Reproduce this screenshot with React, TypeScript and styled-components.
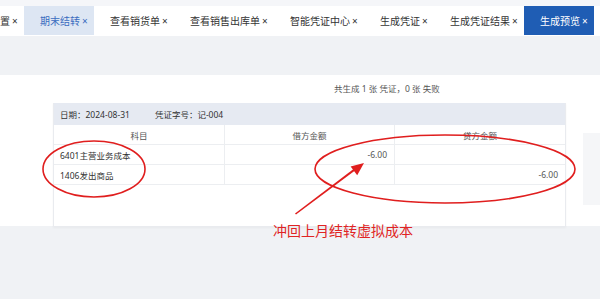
import React from "react";
import styled, { createGlobalStyle } from "styled-components";

const tabs = [
  { id: 0, label: "置", active: "" },
  { id: 1, label: "期末结转", active: "light" },
  { id: 2, label: "查看销货单", active: "" },
  { id: 3, label: "查看销售出库单", active: "" },
  { id: 4, label: "智能凭证中心", active: "" },
  { id: 5, label: "生成凭证", active: "" },
  { id: 6, label: "生成凭证结果", active: "" },
  { id: 7, label: "生成预览", active: "solid" },
];

const rows = [
  { id: 1, subject: "6401主营业务成本", debit: "-6.00", credit: "" },
  { id: 2, subject: "1406发出商品", debit: "", credit: "-6.00" },
];

const App = () => {
  return (
    <Page>
      <GlobalStyle />
      <TopStrip />
      <TabBar>
        <TabStrip>
          {tabs.map(({ id, label, active }) => (
            <Tab key={id} kind={active}>
              {label}
              <Close>×</Close>
            </Tab>
          ))}
        </TabStrip>
      </TabBar>
      <Spacer />
      <Panel>
        <Summary>共生成 1 张 凭证，0 张 失败</Summary>
        <Body>
          <Card>
            <CardHead>
              <span>日期：2024-08-31</span>
              <span>凭证字号：记-004</span>
            </CardHead>
            <Table>
              <HeadCell>科目</HeadCell>
              <HeadCell>借方金额</HeadCell>
              <HeadCell last>贷方金额</HeadCell>
              {rows.map(({ id, subject, debit, credit }) => (
                <React.Fragment key={id}>
                  <Cell>{subject}</Cell>
                  <Cell num>{debit}</Cell>
                  <Cell num last>
                    {credit}
                  </Cell>
                </React.Fragment>
              ))}
            </Table>
          </Card>
          <Side />
        </Body>
      </Panel>

      <Marks width="600" height="299" viewBox="0 0 600 299">
        <ellipse cx="94" cy="169" rx="51" ry="28" fill="none" stroke="#e01e1e" strokeWidth="1.6" />
        <ellipse cx="445" cy="169" rx="130" ry="34" fill="none" stroke="#e01e1e" strokeWidth="1.6" />
        <polygon points="296,214.6 355.4,170.2 354.2,168.6 295,213.4" fill="#e01e1e" />
        <polygon points="364,163 350.6,166.4 357.2,175.2" fill="#e01e1e" />
      </Marks>
      <Note>冲回上月结转虚拟成本</Note>
    </Page>
  );
};

export default App;

const GlobalStyle = createGlobalStyle`
  html, body {
    margin: 0;
    padding: 0;
    background: #f0f2f5;
    font-family: "Noto Sans", "Noto Sans CJK SC", sans-serif;
    overflow: hidden;
  }
`;

const Page = styled.div`
  position: relative;
  width: 600px;
  height: 299px;
  overflow: hidden;
  background: #f0f2f5;
`;

const TopStrip = styled.div`
  height: 6px;
  background: #f5f6f9;
`;

const TabBar = styled.div`
  height: 30px;
  background: #ffffff;
  overflow: hidden;
`;

const TabStrip = styled.div`
  display: flex;
  height: 29px;
  margin-left: -16px;
`;

const Tab = styled.div<{ kind: string }>`
  display: flex;
  align-items: center;
  flex-shrink: 0;
  padding: 0 6px 0 16px;
  font-size: 10px;
  white-space: nowrap;
  font-family: "Noto Sans CJK SC", sans-serif;
  color: ${({ kind }) =>
    kind === "solid" ? "#ffffff" : kind === "light" ? "#3a6cc0" : "#333333"};
  background: ${({ kind }) =>
    kind === "solid" ? "#1f5db4" : kind === "light" ? "#dde6f3" : "transparent"};
`;

const Close = styled.span`
  margin-left: 2px;
  width: 6px;
  font-size: 10px;
  font-family: "Noto Sans", sans-serif;
`;

const Spacer = styled.div`
  height: 39px;
`;

const Panel = styled.div`
  height: 151px;
  background: #ffffff;
  padding-top: 8px;
  box-sizing: border-box;
`;

const Summary = styled.div`
  padding-left: 334px;
  height: 20px;
  font-size: 8.5px;
  line-height: 12px;
  color: #555;
`;

const Body = styled.div`
  display: flex;
  align-items: flex-start;
`;

const Card = styled.div`
  flex-shrink: 0;
  margin-left: 53px;
  width: 513px;
  height: 124px;
  box-sizing: border-box;
  border: 1px solid #e9ebef;
  border-top: none;
  background: #fff;
  box-shadow: 0 1px 2px rgba(0, 0, 0, 0.04);
`;

const CardHead = styled.div`
  display: flex;
  gap: 25px;
  align-items: center;
  height: 22px;
  padding-left: 6px;
  background: #e6eaf2;
  font-size: 8.5px;
  color: #333;
`;

const Table = styled.div`
  display: grid;
  grid-template-columns: 171px 170px 1fr;
  grid-auto-rows: 20px;
  font-size: 8.5px;
  color: #333;
`;

const HeadCell = styled.div<{ last?: boolean }>`
  display: flex;
  align-items: center;
  justify-content: center;
  border-bottom: 1px solid #eceef1;
  border-right: ${({ last }) => (last ? "none" : "1px solid #eceef1")};
  color: #555;
  padding-top: 1px;
`;

const Cell = styled.div<{ num?: boolean; last?: boolean }>`
  display: flex;
  align-items: center;
  justify-content: ${({ num }) => (num ? "flex-end" : "flex-start")};
  padding: 0 7px 0 6px;
  border-bottom: 1px solid #eceef1;
  border-right: ${({ last }) => (last ? "none" : "1px solid #eceef1")};
  color: ${({ num }) => (num ? "#555" : "#333")};
`;

const Side = styled.div`
  flex-shrink: 0;
  margin-left: 17px;
  margin-top: 30px;
  width: 30px;
  height: 72px;
  background: #f5f6f8;
`;

const Marks = styled.svg`
  position: absolute;
  left: 0;
  top: 0;
  pointer-events: none;
`;

const Note = styled.div`
  position: absolute;
  left: 273px;
  top: 220px;
  font-size: 14px;
  line-height: 20px;
  color: #e02424;
  font-family: "Noto Sans CJK SC", sans-serif;
`;
